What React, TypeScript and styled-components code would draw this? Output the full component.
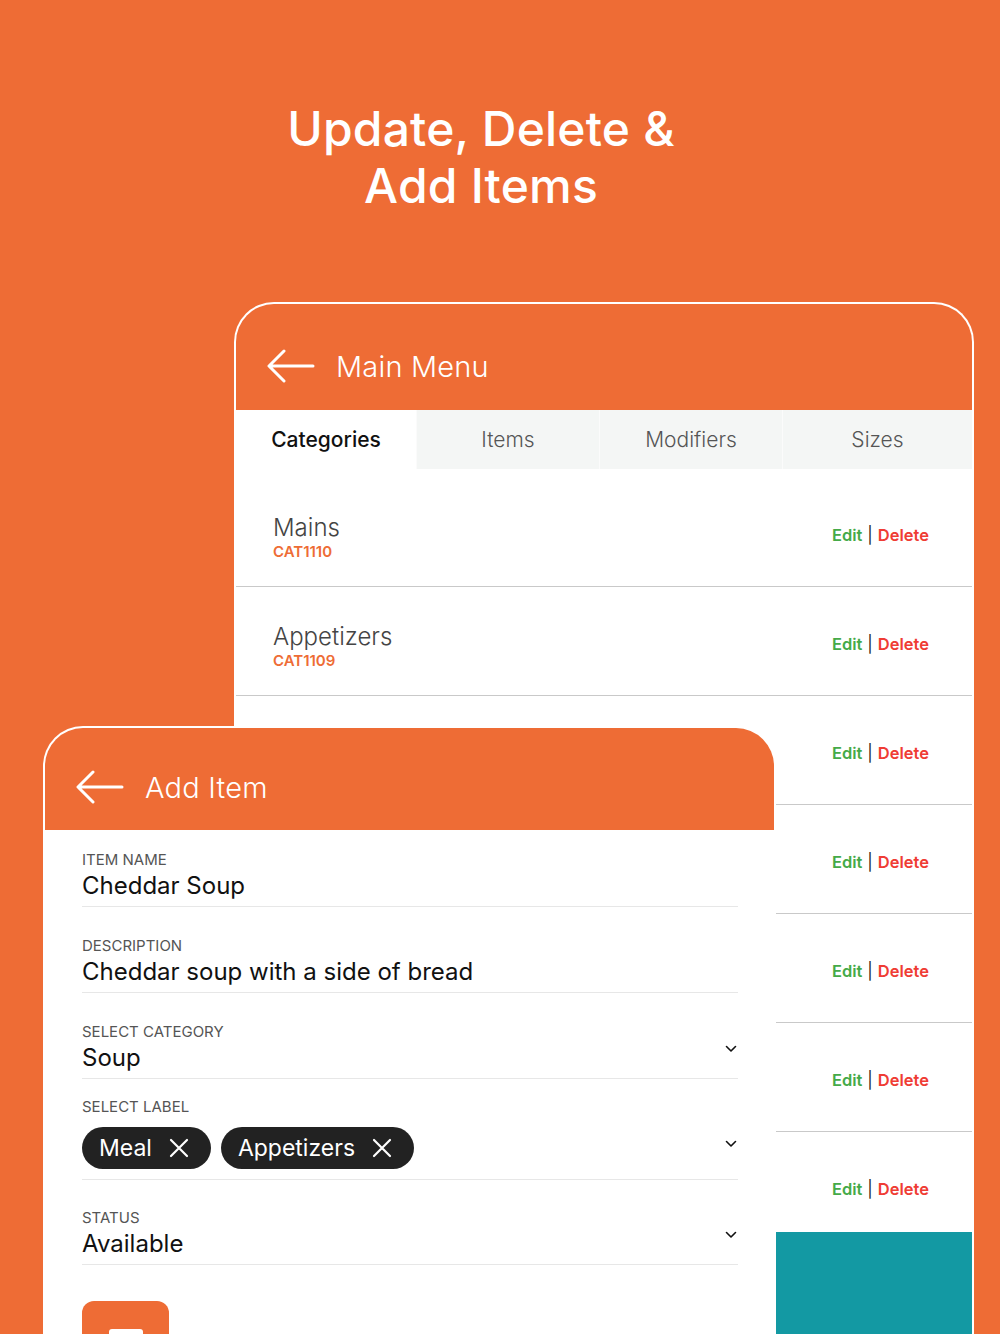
import styled, { createGlobalStyle } from "styled-components";

const GlobalStyle = createGlobalStyle`
  html, body {
    margin: 0;
    padding: 0;
    background: #ee6c35;
  }
  body {
    font-family: Inter, "Noto Sans", "Liberation Sans", sans-serif;
  }
  * {
    box-sizing: border-box;
  }
`;

const categories = [
  { name: "Mains", code: "CAT1110" },
  { name: "Appetizers", code: "CAT1109" },
  { name: "", code: "" },
  { name: "", code: "" },
  { name: "", code: "" },
  { name: "", code: "" },
  { name: "", code: "" },
];

const tabs = ["Categories", "Items", "Modifiers", "Sizes"];

function BackArrow() {
  return (
    <svg width="48" height="34" viewBox="0 0 48 34" fill="none">
      <path
        d="M46 17H3M17 2L2 17L17 32"
        stroke="#fff"
        strokeWidth="3"
        strokeLinecap="round"
        strokeLinejoin="round"
      />
    </svg>
  );
}

function Chevron() {
  return (
    <svg width="12" height="8" viewBox="0 0 12 8" fill="none">
      <path
        d="M1.5 1.5L6 6L10.5 1.5"
        stroke="#111"
        strokeWidth="1.6"
        strokeLinecap="round"
        strokeLinejoin="round"
      />
    </svg>
  );
}

function CloseX() {
  return (
    <svg width="20" height="20" viewBox="0 0 20 20" fill="none">
      <path d="M2 2L18 18M18 2L2 18" stroke="#fff" strokeWidth="2.2" strokeLinecap="round" />
    </svg>
  );
}

export default function App() {
  return (
    <>
      <GlobalStyle />
      <Page>
        <Title>
          Update, Delete &amp;
          <br />
          Add Items
        </Title>
        <Scene>
          {/* main menu screen, behind */}
          <BackCard>
            <Header $height={106} $top={18}>
              <BackArrow />
              <HeaderTitle>Main Menu</HeaderTitle>
            </Header>
            <TabBar>
              {tabs.map((t, i) => (
                <Tab key={t} $active={i === 0}>
                  {t}
                </Tab>
              ))}
            </TabBar>
            <RowList>
              {categories.map((c, i) => (
                <CategoryRow key={i}>
                  <div>
                    {c.name && <CategoryName>{c.name}</CategoryName>}
                    {c.code && <CategoryCode>{c.code}</CategoryCode>}
                  </div>
                  <Actions>
                    <EditLink>Edit</EditLink>
                    <Sep>|</Sep>
                    <DeleteLink>Delete</DeleteLink>
                  </Actions>
                </CategoryRow>
              ))}
            </RowList>
            <TealBar />
          </BackCard>

          {/* add item screen, in front */}
          <FrontCard>
            <Header $height={102} $top={16}>
              <BackArrow />
              <HeaderTitle>Add Item</HeaderTitle>
            </Header>
            <Form>
              <Field $gap={19}>
                <Label>Item Name</Label>
                <ValueRow>
                  <Value>Cheddar Soup</Value>
                </ValueRow>
              </Field>
              <Field $gap={28}>
                <Label>Description</Label>
                <ValueRow>
                  <Value>Cheddar soup with a side of bread</Value>
                </ValueRow>
              </Field>
              <Field $gap={28}>
                <Label>Select Category</Label>
                <ValueRow>
                  <Value>Soup</Value>
                  <ChevronSlot>
                    <Chevron />
                  </ChevronSlot>
                </ValueRow>
              </Field>
              <Field $gap={17} $bottom={10}>
                <Label>Select Label</Label>
                <ValueRow $top={9}>
                  <Chips>
                    <Chip>
                      Meal
                      <CloseX />
                    </Chip>
                    <Chip>
                      Appetizers
                      <CloseX />
                    </Chip>
                  </Chips>
                  <ChevronSlot $top={13}>
                    <Chevron />
                  </ChevronSlot>
                </ValueRow>
              </Field>
              <Field $gap={27}>
                <Label>Status</Label>
                <ValueRow>
                  <Value>Available</Value>
                  <ChevronSlot>
                    <Chevron />
                  </ChevronSlot>
                </ValueRow>
              </Field>
              <UploadRow>
                <UploadTile>
                  <UploadIcon />
                </UploadTile>
                <UploadText>Upload Image</UploadText>
              </UploadRow>
            </Form>
          </FrontCard>
        </Scene>
      </Page>
    </>
  );
}

const Page = styled.div`
  width: 1000px;
  height: 1334px;
  overflow: hidden;
  background: #ee6c35;
`;

const Title = styled.h1`
  margin: 0;
  padding: 100px 38px 0 0;
  text-align: center;
  color: #fff;
  font-size: 48px;
  line-height: 57px;
  font-weight: 500;
  letter-spacing: 0.2px;
`;

const Scene = styled.div`
  position: relative;
  margin-top: 88px;
`;

const BackCard = styled.section`
  margin-left: 234px;
  width: 740px;
  border: 2px solid #fff;
  border-bottom: none;
  border-radius: 40px 40px 0 0;
  overflow: hidden;
  background: #fff;
`;

const Header = styled.div<{ $height: number; $top: number }>`
  height: ${(p) => p.$height}px;
  background: #ee6c35;
  display: flex;
  align-items: center;
  gap: 21px;
  padding: ${(p) => p.$top}px 0 0 31px;
`;

const HeaderTitle = styled.div`
  color: #fff;
  font-size: 29px;
  font-weight: 300;
  letter-spacing: 0.2px;
`;

const TabBar = styled.div`
  display: grid;
  grid-template-columns: 180px 183px 183px 1fr;
  height: 59px;
  background: #f4f6f5;
`;

const Tab = styled.div<{ $active?: boolean }>`
  display: flex;
  align-items: center;
  justify-content: center;
  font-size: 21px;
  background: ${(p) => (p.$active ? "#fff" : "#f4f6f5")};
  color: ${(p) => (p.$active ? "#111" : "#555")};
  font-weight: ${(p) => (p.$active ? 500 : 300)};
  border-left: 1px solid #fbfbfb;
  &:first-child {
    border-left: none;
  }
`;

const RowList = styled.div`
  height: 763px;
  overflow: hidden;
  padding-top: 9px;
`;

const CategoryRow = styled.div`
  height: 109px;
  flex-shrink: 0;
  display: flex;
  align-items: center;
  justify-content: space-between;
  padding: 11px 43px 0 37px;
  border-bottom: 1.5px solid #c9c9c9;
`;

const CategoryName = styled.div`
  font-size: 24px;
  line-height: 28px;
  font-weight: 300;
  color: #444;
`;

const CategoryCode = styled.div`
  font-size: 15px;
  line-height: 20px;
  font-weight: 600;
  color: #ee6c35;
`;

const Actions = styled.div`
  display: flex;
  align-items: center;
  gap: 5px;
  font-size: 16.5px;
  font-weight: 600;
  margin-top: -5px;
`;

const EditLink = styled.span`
  color: #45aa48;
`;

const Sep = styled.span`
  color: #222;
  font-weight: 400;
`;

const DeleteLink = styled.span`
  color: #ef3c34;
`;

const TealBar = styled.div`
  height: 140px;
  background: #1399a3;
`;

const FrontCard = styled.section`
  position: absolute;
  left: 43px;
  top: 424px;
  width: 733px;
  height: 640px;
  border: 2px solid #fff;
  border-bottom: none;
  border-radius: 40px 40px 0 0;
  overflow: hidden;
  background: #fff;
`;

const Form = styled.div`
  padding: 0 36px 0 37px;
`;

const Field = styled.div<{ $gap: number; $bottom?: number }>`
  margin-top: ${(p) => p.$gap}px;
  padding-bottom: ${(p) => p.$bottom ?? 5}px;
  border-bottom: 1.5px solid #e7e7e7;
`;

const Label = styled.div`
  font-size: 15px;
  line-height: 22px;
  color: #555;
  text-transform: uppercase;
  font-weight: 400;
`;

const ValueRow = styled.div<{ $top?: number }>`
  display: flex;
  justify-content: space-between;
  align-items: flex-start;
  margin-top: ${(p) => p.$top ?? 0}px;
`;

const Value = styled.div`
  font-size: 24px;
  line-height: 30px;
  color: #111;
`;

const ChevronSlot = styled.div<{ $top?: number }>`
  display: flex;
  margin-top: ${(p) => p.$top ?? 2}px;
  margin-right: 1px;
`;

const Chips = styled.div`
  display: flex;
  gap: 10px;
`;

const Chip = styled.div`
  height: 42px;
  border-radius: 21px;
  background: #222;
  color: #fff;
  display: flex;
  align-items: center;
  gap: 17px;
  padding: 0 22px 0 17px;
  font-size: 23px;
`;

const UploadRow = styled.div`
  display: flex;
  align-items: center;
  gap: 46px;
  margin-top: 36px;
`;

const UploadTile = styled.div`
  width: 87px;
  height: 87px;
  border-radius: 12px;
  background: #ee6c35;
  display: flex;
  justify-content: center;
  padding-top: 28px;
`;

const UploadIcon = styled.div`
  width: 34px;
  height: 28px;
  border-radius: 3px;
  background: #fff;
`;

const UploadText = styled.div`
  font-size: 22px;
  color: #111;
`;
